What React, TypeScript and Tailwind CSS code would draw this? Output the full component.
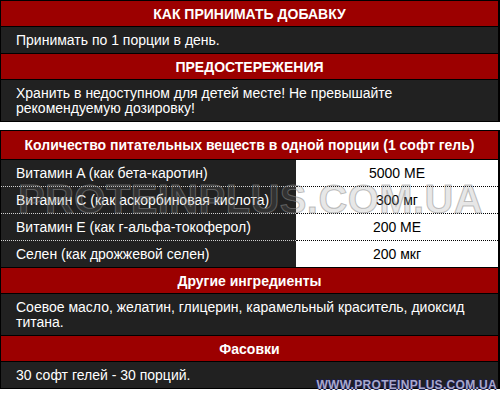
import * as React from 'react';

const nutrients = [
  { name: 'Витамин A (как бета-каротин)', value: '5000 МЕ' },
  { name: 'Витамин C (как аскорбиновая кислота)', value: '300 мг' },
  { name: 'Витамин E (как г-альфа-токоферол)', value: '200 МЕ' },
  { name: 'Селен (как дрожжевой селен)', value: '200 мкг' },
];

const Head = ({ children }: { children: React.ReactNode }) => (
  <div className="bg-[#9c0000] text-white font-bold text-center h-[26px] leading-[26px] border-b border-black">
    {children}
  </div>
);

const Text = ({ children, last }: { children: React.ReactNode; last?: boolean }) => (
  <div className={'bg-[#212121] text-white pl-[15px] pr-2 pt-[6px] pb-[5px] leading-[15px] ' + (last ? '' : 'border-b border-black')}>
    {children}
  </div>
);

export default function App() {
  return (
    <div className="relative w-[500px] h-[395px] bg-white text-[14px] font-['Liberation_Sans',Arial,sans-serif] overflow-hidden">
      <div className="border-l border-t border-b border-r-2 border-black">
        <Head>КАК ПРИНИМАТЬ ДОБАВКУ</Head>
        <Text>Принимать по 1 порции в день.</Text>
        <Head>ПРЕДОСТЕРЕЖЕНИЯ</Head>
        <Text last>
          Хранить в недоступном для детей месте! Не превышайте
          <br />
          рекомендуемую дозировку!
        </Text>
      </div>

      <div className="mt-[8px] border-l border-t border-b border-r-2 border-black">
        <div className="bg-[#9c0000] text-white font-bold text-center h-[29px] leading-[29px] border-b border-black">
          Количество питательных веществ в одной порции (1 софт гель)
        </div>
        {nutrients.map((n, i) => (
          <div key={n.name} className={'flex h-[27px] ' + (i === nutrients.length - 1 ? 'border-b border-black' : '')}>
            <div
              className={
                'w-[295px] bg-[#212121] text-white pl-[15px] leading-[26px] whitespace-nowrap ' +
                (i < nutrients.length - 1 ? 'border-b border-dotted border-[#d0d0d0]' : '')
              }
            >
              {n.name}
            </div>
            <div
              className={
                'flex-1 bg-white text-black text-center leading-[26px] ' +
                (i < nutrients.length - 1 ? 'border-b border-dotted border-black' : '')
              }
            >
              {n.value}
            </div>
          </div>
        ))}
        <Head>Другие ингредиенты</Head>
        <Text>
          Соевое масло, желатин, глицерин, карамельный краситель, диоксид
          <br />
          титана.
        </Text>
        <Head>Фасовки</Head>
        <Text last>30 софт гелей - 30 порций.</Text>
      </div>

      <div className="absolute left-[18px] top-[179px] text-[40px] leading-[40px] font-bold tracking-[0.4px] text-[rgba(128,128,128,0.2)] [-webkit-text-stroke:1px_rgba(140,140,140,0.55)] pointer-events-none select-none">
        PROTEINPLUS.COM.UA
      </div>

      <div className="absolute right-[3px] bottom-[4px] text-[12px] leading-[12px] font-bold tracking-[0.3px] text-[#a8a8cc] [text-shadow:1px_0_0_#1c1c48,-1px_0_0_#1c1c48,0_1px_0_#1c1c48,0_-1px_0_#1c1c48] pointer-events-none select-none">
        WWW.PROTEINPLUS.COM.UA
      </div>
    </div>
  );
}
